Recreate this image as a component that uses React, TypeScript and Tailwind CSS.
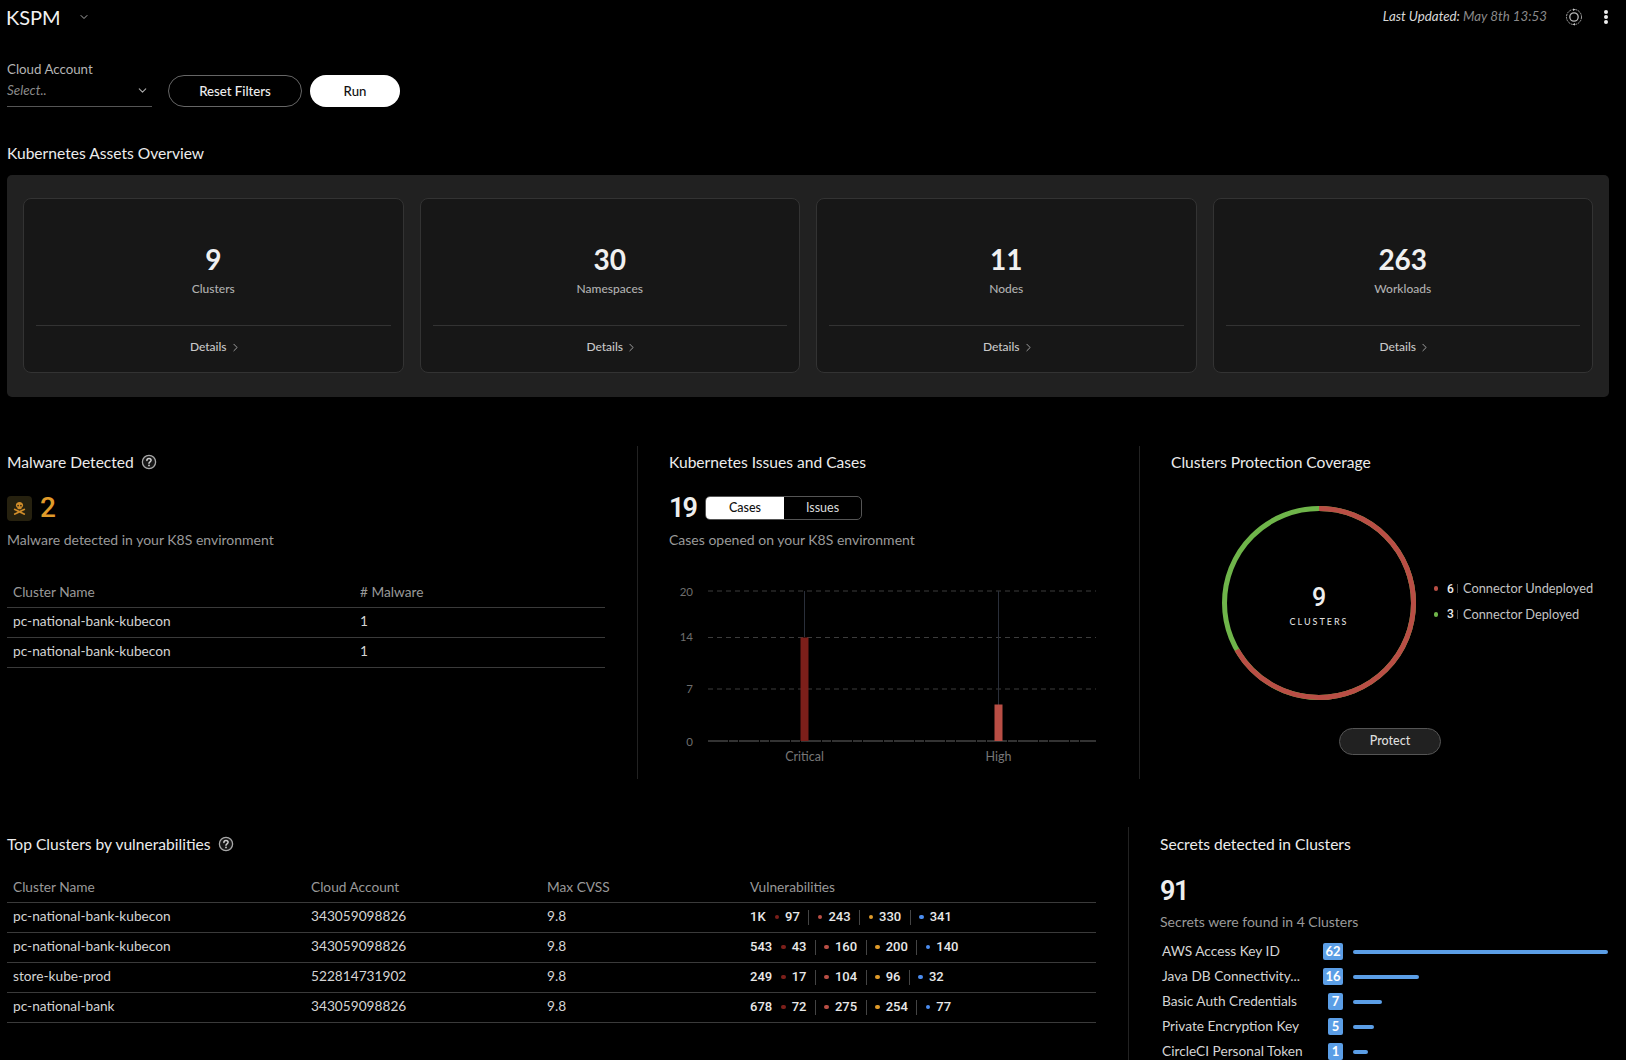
import React from "react";
import { ChevronDown, ChevronRight } from "lucide-react";
import { FaSkullCrossbones } from "react-icons/fa";

const cards = [
  ["9", "Clusters"],
  ["30", "Namespaces"],
  ["11", "Nodes"],
  ["263", "Workloads"],
];

const vulns: [string, string, string, string, string, string, string][] = [
  ["pc-national-bank-kubecon", "343059098826", "1K", "97", "243", "330", "341"],
  ["pc-national-bank-kubecon", "343059098826", "543", "43", "160", "200", "140"],
  ["store-kube-prod", "522814731902", "249", "17", "104", "96", "32"],
  ["pc-national-bank", "343059098826", "678", "72", "275", "254", "77"],
];

const secrets: [string, string, number][] = [
  ["AWS Access Key ID", "62", 255],
  ["Java DB Connectivity...", "16", 66],
  ["Basic Auth Credentials", "7", 29],
  ["Private Encryption Key", "5", 21],
  ["CircleCI Personal Token", "1", 15],
];

function Sev({ color, n, last }: { color: string; n: string; last?: boolean }) {
  return (
    <div className="flex items-center">
      <span className={`w-[4.5px] h-[4.5px] rounded-full ${color}`} />
      <span className="ml-[6px] font-[Roboto,sans-serif] font-medium text-[13px] text-[#e8e8e8]">{n}</span>
      {!last && <span className="mx-[8.5px] w-px h-[15px] bg-[#444]" />}
    </div>
  );
}

function Title({ children }: { children: React.ReactNode }) {
  return <h2 className="h-[24px] leading-[24px] text-[15.6px] font-normal text-[#ececec]">{children}</h2>;
}

function Help({ className }: { className: string }) {
  return (
    <svg className={className} width="16" height="16" viewBox="0 0 16 16" fill="none">
      <circle cx="8" cy="8" r="6.6" stroke="#a8a8a8" strokeWidth="1.3" fill="#161616" />
      <path d="M5.9 6.4c0-1.2 1-1.9 2.1-1.9s2.1.7 2.1 1.8c0 1.5-2.1 1.5-2.1 3" stroke="#cfcfcf" strokeWidth="1.5" strokeLinecap="round" />
      <circle cx="8" cy="11.4" r="0.9" fill="#cfcfcf" />
    </svg>
  );
}

export default function App() {
  return (
    <div className="w-[1626px] h-[1060px] overflow-hidden bg-black text-white font-[Lato,sans-serif]">
      <header className="h-[34px] flex items-center justify-between pl-[6px] pr-[18px]">
        <div className="flex items-center">
          <span className="text-[20px] leading-[34px] text-[#f2f2f2]">KSPM</span>
          <ChevronDown className="ml-[17px] text-[#aaa]" size={12} strokeWidth={2} />
        </div>
        <div className="flex items-center">
          <span className="italic text-[13.3px] text-[#d8d8d8]">Last Updated:<span className="text-[#8a8a8a]"> May 8th 13:53</span></span>
          <svg className="ml-[18px]" width="18" height="18" viewBox="0 0 18 18" fill="none" stroke="#b8b8b8">
            <path d="M10.5 1.6a7.5 7.5 0 0 1 6 7.4" strokeWidth="0.9" strokeDasharray="2 0.8" />
            <path d="M7.5 16.4a7.5 7.5 0 0 1-6-7.4 7.5 7.5 0 0 1 6-7.4" strokeWidth="0.9" strokeDasharray="2 0.8" />
            <path d="M16.5 9a7.5 7.5 0 0 1-6 7.4" strokeWidth="0.9" strokeDasharray="2 0.8" />
            <circle cx="9" cy="9" r="4.2" strokeWidth="1.3" />
            <path d="M8 0.4l2.6 1.2L8 3z" fill="#c8c8c8" stroke="none" />
            <path d="M10 17.6l-2.6-1.2L10 15z" fill="#c8c8c8" stroke="none" />
          </svg>
          <div className="ml-[21px] flex flex-col gap-[1.5px] w-[4px]">
            <span className="w-[3.5px] h-[3.5px] rounded-full bg-[#eee]" />
            <span className="w-[3.5px] h-[3.5px] rounded-full bg-[#eee]" />
            <span className="w-[3.5px] h-[3.5px] rounded-full bg-[#eee]" />
          </div>
        </div>
      </header>

      <div className="mt-[25px] ml-[7px] flex items-end">
        <div className="w-[145px]">
          <div className="h-[20px] leading-[20px] text-[13.3px] text-[#b4b4b4]">Cloud Account</div>
          <div className="h-[28px] pb-[4px] flex items-center justify-between border-b border-[#555] pr-[3px]">
            <span className="italic text-[13.4px] text-[#8a8a8a]">Select..</span>
            <ChevronDown className="text-[#aaa]" size={13} strokeWidth={2} />
          </div>
        </div>
        <button className="ml-[16px] w-[134px] h-[32px] pt-[1px] rounded-full border border-[#666] text-[13.2px] font-medium text-[#eee]">Reset Filters</button>
        <button className="ml-[8px] w-[90px] h-[32px] pt-[1px] rounded-full bg-white text-[13.2px] font-medium text-[#111]">Run</button>
      </div>

      <div className="mt-[34px] ml-[7px]"><Title>Kubernetes Assets Overview</Title></div>

      <section className="mt-[10px] ml-[7px] w-[1602px] h-[222px] rounded-[5px] bg-[#212121] pt-[23px] px-[16px] grid grid-cols-4 gap-[16px]">
        {cards.map(([n, l]) => (
          <div key={l} className="h-[175px] rounded-[8px] border border-[#333] bg-[#171717] px-[12px] flex flex-col items-center">
            <div className="mt-[43px] h-[34px] leading-[34px] text-[28px] font-bold text-[#f0f0f0]">{n}</div>
            <div className="mt-[3px] h-[20px] leading-[20px] text-[12px] font-medium text-[#b0b0b0]">{l}</div>
            <div className="mt-[26px] w-full border-t border-[#333]" />
            <div className="mt-[12px] pl-[5px] flex items-center text-[12px] font-medium text-[#c8c8c8]">
              Details
              <ChevronRight className="ml-[2px] text-[#bbb]" size={13} strokeWidth={1.5} />
            </div>
          </div>
        ))}
      </section>

      <section className="mt-[49px] h-[333px] flex">
        <div className="w-[637px] pl-[7px] pr-[32px] pt-[4px] shrink-0">
          <div className="flex items-center">
            <Title>Malware Detected</Title>
            <Help className="ml-[7px]" />
          </div>
          <div className="mt-[21px] h-[26px] flex items-center">
            <div className="w-[25px] h-[25px] rounded-[4px] bg-[#26210f] flex items-center justify-center">
              <FaSkullCrossbones className="text-[#cf8c2a]" size={13} />
            </div>
            <span className="ml-[8px] font-[Roboto,sans-serif] text-[28px] font-medium text-[#e09b2a] leading-[26px]">2</span>
          </div>
          <p className="mt-[9px] h-[20px] leading-[20px] text-[14px] text-[#9a9a9a]">Malware detected in your K8S environment</p>
          <table className="mt-[27px] w-full text-[13.7px] border-collapse">
            <thead>
              <tr className="h-[30px] border-b border-[#3a3a3a] text-[#999] text-left">
                <th className="font-normal pl-[6px] pt-[2px] w-[353px]">Cluster Name</th>
                <th className="font-normal pt-[2px]"># Malware</th>
              </tr>
            </thead>
            <tbody className="text-[#d4d4d4]">
              <tr className="h-[30px] border-b border-[#3a3a3a]"><td className="pl-[6px] pb-[1px]">pc-national-bank-kubecon</td><td className="pb-[1px]">1</td></tr>
              <tr className="h-[30px] border-b border-[#3a3a3a]"><td className="pl-[6px] pb-[1px]">pc-national-bank-kubecon</td><td className="pb-[1px]">1</td></tr>
            </tbody>
          </table>
        </div>

        <div className="w-[502px] border-l border-[#222] pl-[31px] pt-[4px] shrink-0">
          <Title>Kubernetes Issues and Cases</Title>
          <div className="mt-[21px] h-[26px] flex items-center">
            <span className="font-[Roboto,sans-serif] font-semibold text-[27px] tracking-[-2px] leading-[26px] w-[36px] text-[#eee]">19</span>
            <div className="w-[157px] h-[24px] flex rounded-[5px] border border-[#555] overflow-hidden text-[12.5px]">
              <div className="w-[78px] bg-white text-[#111] font-medium flex items-center justify-center">Cases</div>
              <div className="flex-1 text-[#ddd] flex items-center justify-center">Issues</div>
            </div>
          </div>
          <p className="mt-[9px] h-[20px] leading-[20px] text-[14px] text-[#9a9a9a]">Cases opened on your K8S environment</p>
          <svg className="block" width="440" height="228" viewBox="0 0 440 228" fontFamily="Lato, sans-serif">
            {[41, 87.5, 139].map((y) => (
              <line key={y} x1="39" x2="427" y1={y} y2={y} stroke="#3c3c3c" strokeDasharray="5 4" />
            ))}
            <line x1="39" x2="427" y1="191" y2="191" stroke="#666" strokeDasharray="20 1 9 1" />
            <line x1="135.5" x2="135.5" y1="41" y2="87" stroke="#2a2f3a" />
            <line x1="329.5" x2="329.5" y1="41" y2="155" stroke="#2a2f3a" />
            <rect x="131.5" y="87.5" width="8" height="103.5" fill="#7c1f1a" />
            <rect x="325.5" y="154.5" width="8" height="36.5" fill="#b94e45" />
            <g fontSize="11.5" fill="#6e6e6e" textAnchor="end">
              <text x="24" y="46">20</text>
              <text x="24" y="91">14</text>
              <text x="24" y="143">7</text>
              <text x="24" y="196">0</text>
            </g>
            <g fontSize="12.5" fill="#777" textAnchor="middle">
              <text x="135.5" y="211">Critical</text>
              <text x="329.5" y="211">High</text>
            </g>
          </svg>
        </div>

        <div className="flex-1 border-l border-[#222] pl-[31px] pt-[4px]">
          <Title>Clusters Protection Coverage</Title>
          <div className="mt-[29px] ml-[48px] flex items-start">
            <div className="relative w-[200px] h-[200px]">
              <svg width="200" height="200" viewBox="0 0 200 200">
                <g transform="rotate(-90 100 100)" fill="none" strokeWidth="5">
                  <circle cx="100" cy="100" r="94.5" stroke="#6fb54a" />
                  <circle cx="100" cy="100" r="94.5" stroke="#b94e45" strokeDasharray="395.8 593.8" />
                </g>
              </svg>
              <div className="absolute inset-0 flex flex-col items-center">
                <span className="mt-[80px] h-[30px] leading-[30px] font-[Roboto,sans-serif] font-medium text-[25px] text-[#eee]">9</span>
                <span className="mt-[2px] text-[9px] leading-[14px] tracking-[2px] text-[#ddd] font-medium">CLUSTERS</span>
              </div>
            </div>
            <div className="ml-[15px] mt-[73px] text-[12.8px]">
              {[["bg-[#b94e45]", "6", "Connector Undeployed"], ["bg-[#6fb54a]", "3", "Connector Deployed"]].map(([c, n, l]) => (
                <div key={l} className="h-[25.5px] flex items-center">
                  <span className={`w-[4px] h-[5px] rounded-full ${c}`} />
                  <span className="ml-[9px] w-[9px] font-[Roboto,sans-serif] font-medium text-[12px] text-[#eee]">{n}</span>
                  <span className="ml-[1px] w-px h-[9px] bg-[#444]" />
                  <span className="ml-[5px] text-[#c4c4c4]">{l}</span>
                </div>
              ))}
            </div>
          </div>
          <button className="mt-[25px] ml-[168px] w-[102px] h-[27px] rounded-full bg-[#212121] border border-[#555] text-[12.5px] font-medium text-[#ddd]">Protect</button>
        </div>
      </section>

      <section className="mt-[48px] flex h-[233px]">
        <div className="w-[1128px] pl-[7px] pr-[32px] pt-[5px] shrink-0">
          <div className="flex items-center">
            <Title>Top Clusters by vulnerabilities</Title>
            <Help className="ml-[7px]" />
          </div>
          <table className="mt-[16px] w-full text-[13.7px] border-collapse table-fixed">
            <thead>
              <tr className="h-[30px] border-b border-[#3a3a3a] text-[#999] text-left">
                <th className="font-normal pl-[6px] pt-[2px] w-[304px]">Cluster Name</th>
                <th className="font-normal pt-[2px] w-[236px]">Cloud Account</th>
                <th className="font-normal pt-[2px] w-[203px]">Max CVSS</th>
                <th className="font-normal pt-[2px]">Vulnerabilities</th>
              </tr>
            </thead>
            <tbody className="text-[#d4d4d4]">
              {vulns.map((r, i) => (
                <tr key={i} className="h-[30px] border-b border-[#3a3a3a]">
                  <td className="pl-[6px] pb-[1px]">{r[0]}</td>
                  <td className="pb-[1px]">{r[1]}</td>
                  <td className="pb-[1px]">9.8</td>
                  <td>
                    <div className="flex items-center">
                      <span className="mr-[9px] font-[Roboto,sans-serif] font-medium text-[13px] text-[#e8e8e8]">{r[2]}</span>
                      <Sev color="bg-[#7c1f1a]" n={r[3]} />
                      <Sev color="bg-[#b94e45]" n={r[4]} />
                      <Sev color="bg-[#e09b2a]" n={r[5]} />
                      <Sev color="bg-[#4b8df0]" n={r[6]} last />
                    </div>
                  </td>
                </tr>
              ))}
            </tbody>
          </table>
        </div>
        <div className="flex-1 border-l border-[#222] pl-[31px] pt-[5px]">
          <Title>Secrets detected in Clusters</Title>
          <div className="mt-[18px] h-[34px] leading-[34px] font-[Roboto,sans-serif] font-semibold text-[27px] tracking-[-1.5px] text-[#eee]">91</div>
          <p className="mt-[4px] h-[20px] leading-[20px] text-[14px] text-[#9a9a9a]">Secrets were found in 4 Clusters</p>
          <div className="mt-[7px] pl-[2px]">
            {secrets.map(([l, n, w]) => (
              <div key={l} className="h-[25px] flex items-center">
                <span className="w-[150px] text-[13.7px] text-[#d4d4d4] whitespace-nowrap">{l}</span>
                <div className="w-[31px] flex justify-end">
                  <span className={`h-[17px] rounded-[2px] bg-[#5b9ee6] text-[13px] leading-[17px] font-bold text-white text-center ${n.length > 1 ? "w-[20px]" : "w-[15px]"}`}>{n}</span>
                </div>
                <div className="ml-[10px] h-[4px] rounded-full bg-[#5b9ee6]" style={{ width: w }} />
              </div>
            ))}
          </div>
        </div>
      </section>
    </div>
  );
}
